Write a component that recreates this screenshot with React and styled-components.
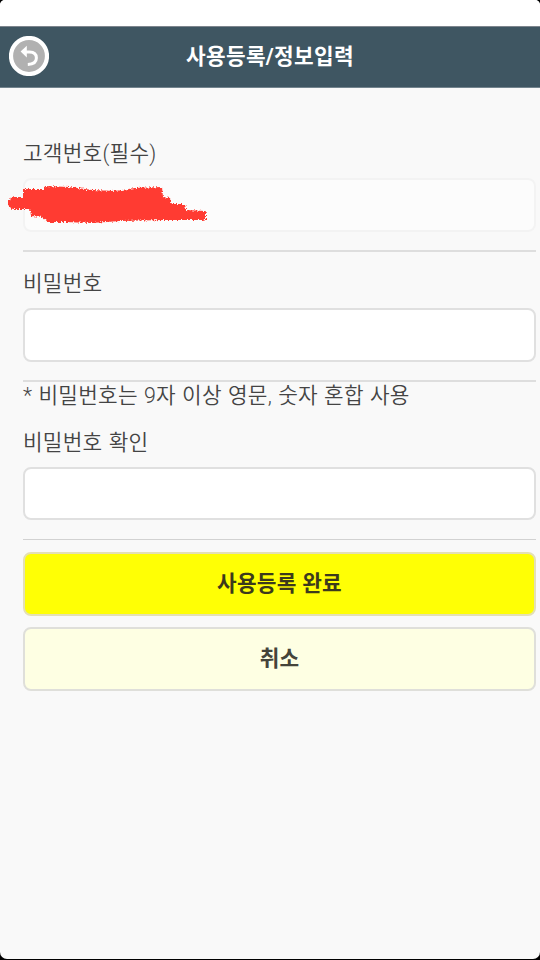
import React from 'react';
import styled, { createGlobalStyle } from 'styled-components';

const App = () => {
    return (
        <Screen>
            <GlobalStyle />
            <StatusBar />
            <Header>
                <BackButton aria-label='뒤로'>
                    <BackIcon />
                </BackButton>
                <Title>사용등록/정보입력</Title>
            </Header>
            <Form onSubmit={e => e.preventDefault()}>
                <Field>
                    <Label htmlFor='customer'>고객번호(필수)</Label>
                    <InputWrapper>
                        <Input id='customer' disabled />
                        <Scribble />
                    </InputWrapper>
                </Field>
                <Divider />
                <Field>
                    <Label htmlFor='password'>비밀번호</Label>
                    <Input id='password' type='password' />
                </Field>
                <Divider />
                <Note>* 비밀번호는 9자 이상 영문, 숫자 혼합 사용</Note>
                <Field>
                    <Label htmlFor='confirm'>비밀번호 확인</Label>
                    <Input id='confirm' type='password' $height='53px' />
                </Field>
                <Divider $thin />
                <Actions>
                    <Button type='submit' $primary>사용등록 완료</Button>
                    <Button type='button'>취소</Button>
                </Actions>
            </Form>
        </Screen>
    );
};

export default App;

const BackIcon = () => (
    <svg width='40' height='40' viewBox='0 0 40 40'>
        <circle cx='20' cy='20' r='18' fill='#b1b1b1' stroke='#fff' strokeWidth='4.2' />
        <path d='M11.6 15.6 L17.8 9.8 L17.8 21.4 Z' fill='#fff' />
        <path d='M16 15.9 H20.5 C25.6 15.9 27.4 18.7 27.4 21.9 C27.4 26 24 28.2 18.8 28.4' fill='none' stroke='#fff' strokeWidth='3' />
    </svg>
);

// marker stroke that hides the customer number
const Scribble = () => (
    <ScribbleSvg width='206' height='50' viewBox='0 0 206 50'>
        <filter id='rough' x='-5%' y='-10%' width='110%' height='120%'>
            <feTurbulence type='fractalNoise' baseFrequency='0.6' numOctaves='2' seed='4' result='noise' />
            <feDisplacementMap in='SourceGraphic' in2='noise' scale='5' xChannelSelector='R' yChannelSelector='G' />
            <feGaussianBlur stdDeviation='0.5' />
        </filter>
        <path
            filter='url(#rough)'
            fill='#ff3b30'
            d='M20 10 L41 10 L42 7 L66 8 L90 11 L112 12 L132 9 L159 8 L160 18 L167 19 L169 25 L182 25 L183 31 L202 32 L203 34 L203 40 L200 41 L160 41 L118 42 L88 44 L62 43 L45 43 L39 38 L28 37 L27 30 L10 30 L5 27 L5 21 L10 18 L20 18 Z'
        />
    </ScribbleSvg>
);

const GlobalStyle = createGlobalStyle`
  * {
    box-sizing: border-box;
  }

  body {
    margin: 0;
    background: #000;
    font-family: Roboto, 'Noto Sans CJK KR', sans-serif;
  }

  input, button {
    font-family: inherit;
    font-size: 21.33px;
  }
`;

const Screen = styled.div`
  height: 959px;
  display: flex;
  flex-direction: column;
  overflow: hidden;
  border-radius: 5px 5px 7px 7px;
  background: #f9f9f9;
`;

const StatusBar = styled.div`
  height: 26px;
  flex: none;
  background: #fff;
`;

const Header = styled.header`
  height: 62px;
  flex: none;
  display: grid;
  grid-template-columns: 49px 1fr 49px;
  align-items: center;
  border-top: 1px solid #7d858d;
  border-bottom: 1px solid #73848e;
  background: #3f5662;
`;

const BackButton = styled.button`
  width: 40px;
  height: 40px;
  margin: 0 0 2px 9px;
  padding: 0;
  border: none;
  border-radius: 50%;
  background: none;
  cursor: pointer;

  svg {
    display: block;
  }
`;

const Title = styled.h1`
  margin: 0;
  font-size: 21.33px;
  line-height: 32px;
  letter-spacing: 0.35px;
  font-weight: bold;
  text-align: center;
  color: #fff;
`;

const Form = styled.form`
  display: flex;
  flex-direction: column;
  padding: 50px 4px 0 23px;
`;

const Field = styled.div`
  display: flex;
  flex-direction: column;
  gap: 9px;
  padding-bottom: 18px;
`;

const Label = styled.label`
  font-size: 21.33px;
  line-height: 31px;
  letter-spacing: 0.25px;
  word-spacing: 0.7px;
  font-weight: 350;
  color: #444;
`;

const InputWrapper = styled.div`
  position: relative;
  display: flex;
`;

const Input = styled.input`
  width: 100%;
  height: ${({ $height }) => $height || '54px'};
  padding: 0 10px;
  border: 2px solid #e0e0e0;
  border-radius: 8px;
  outline: none;
  background: #fff;

  &:disabled {
    border-color: #f3f3f3;
    background: #fcfcfc;
  }
`;

const ScribbleSvg = styled.svg`
  position: absolute;
  top: 1px;
  left: -20px;
`;

const Divider = styled.hr`
  width: 100%;
  height: ${({ $thin }) => $thin ? '1px' : '2px'};
  margin: ${({ $thin }) => $thin ? '1px 0 15px' : '0 0 16px'};
  border: none;
  background: ${({ $thin }) => $thin ? '#d2d2d2' : '#dedede'};
`;

const Note = styled.p`
  margin: -16px 0 17px;
  font-size: 21.33px;
  line-height: 28px;
  letter-spacing: 0.25px;
  word-spacing: 0.7px;
  font-weight: 350;
  color: #444;
`;

const Actions = styled.div`
  display: flex;
  flex-direction: column;
  gap: 11px;
  margin-top: -3px;
`;

const Button = styled.button`
  height: 64px;
  padding: 0 0 6px;
  border: 2px solid ${({ $primary }) => $primary ? '#e4e0b4' : '#dfdfda'};
  border-radius: 8px;
  background: ${({ $primary }) => $primary ? '#ffff05' : '#feffe3'};
  letter-spacing: 0.25px;
  font-weight: bold;
  color: ${({ $primary }) => $primary ? '#3c3a1c' : '#45443a'};
  cursor: pointer;
`;
